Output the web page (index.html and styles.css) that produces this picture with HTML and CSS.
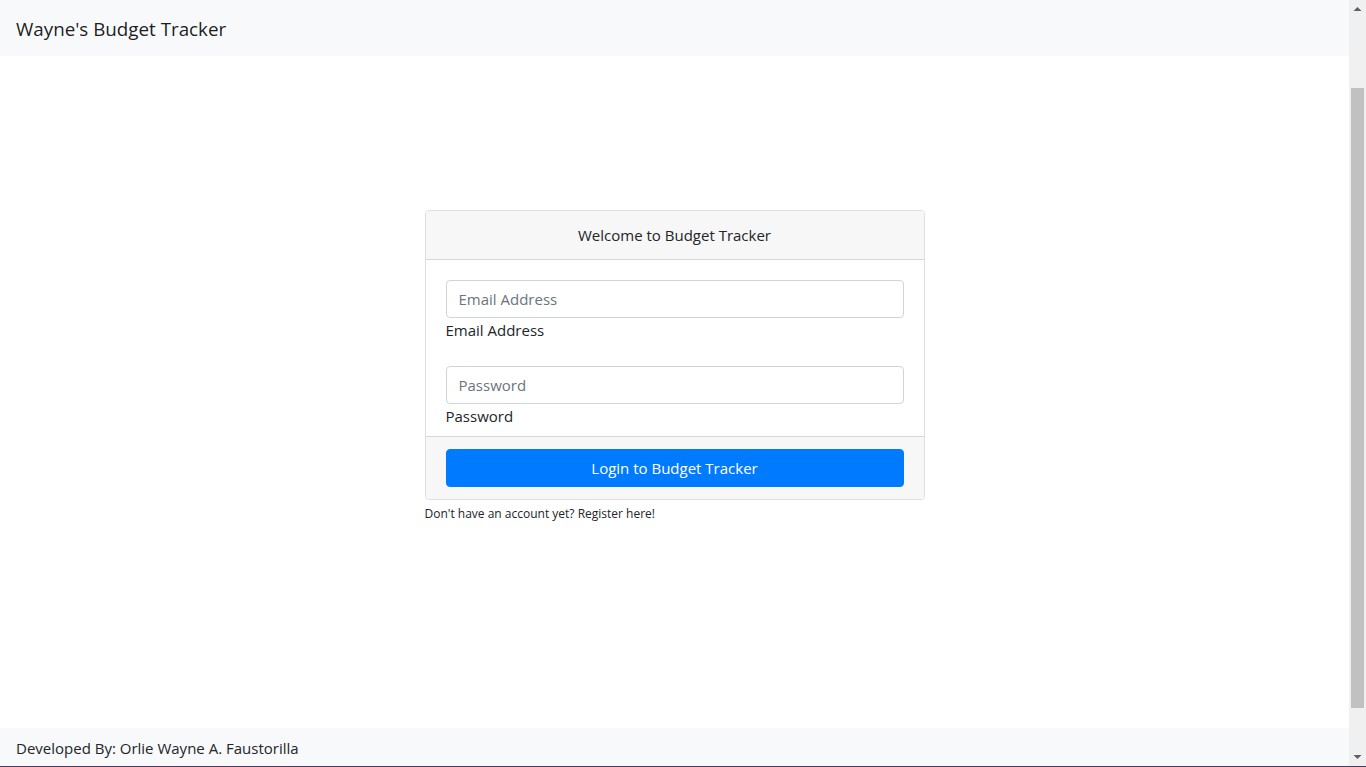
FILE: index.html
```html
<!DOCTYPE html>
<html lang="en">
<head>
<meta charset="utf-8">
<title>Wayne's Budget Tracker</title>
<link rel="stylesheet" href="styles.css">
</head>
<body>
<div class="app">
  <div class="page">
    <nav class="navbar">
      <span class="brand">Wayne's Budget Tracker</span>
    </nav>
    <main class="main">
      <div class="login">
        <div class="card">
          <div class="card-header">Welcome to Budget Tracker</div>
          <form class="card-body">
            <div class="group">
              <input class="control" type="email" placeholder="Email Address">
              <label class="label">Email Address</label>
            </div>
            <div class="group last">
              <input class="control" type="password" placeholder="Password">
              <label class="label">Password</label>
            </div>
          </form>
          <div class="card-footer">
            <button class="btn" type="button">Login to Budget Tracker</button>
          </div>
        </div>
        <a class="register">Don't have an account yet? Register here!</a>
      </div>
    </main>
    <footer class="footer">Developed By: Orlie Wayne A. Faustorilla</footer>
  </div>
  <div class="scrollbar">
    <div class="sb-btn">
      <svg width="17" height="17" viewBox="0 0 17 17"><polygon points="4.5,11 8.5,7 12.5,11" fill="#606060"/></svg>
    </div>
    <div class="sb-track"><div class="sb-thumb"></div></div>
    <div class="sb-btn">
      <svg width="17" height="17" viewBox="0 0 17 17"><polygon points="4.5,6 12.5,6 8.5,10" fill="#606060"/></svg>
    </div>
  </div>
</div>
</body>
</html>
```
FILE: styles.css
```css
body {
  margin: 0;
  font-family: "Open Sans", "Noto Sans", sans-serif;
  font-size: 15px;
  line-height: 24px;
  color: #212529;
  background: #fff;
}
.app {
  display: flex;
  height: 767px;
  border-bottom: 1px solid #4a3b5c;
  box-sizing: border-box;
  overflow: hidden;
}
.page {
  flex: 1;
  display: flex;
  flex-direction: column;
  min-width: 0;
}
.navbar {
  height: 56px;
  flex: none;
  background: #f8f9fa;
  display: flex;
  align-items: center;
  padding: 2px 16px 0;
  box-sizing: border-box;
}
.brand {
  font-size: 18.8px;
  line-height: 30px;
  color: rgba(0, 0, 0, 0.9);
}
.main {
  flex: 1;
  padding-top: 154px;
  box-sizing: border-box;
  display: flex;
  justify-content: center;
}
.login {
  width: 500px;
}
.card {
  border: 1px solid rgba(0, 0, 0, 0.125);
  border-radius: 4px;
  overflow: hidden;
}
.card-header {
  background: #f7f7f7;
  border-bottom: 1px solid rgba(0, 0, 0, 0.125);
  padding: 12px 20px;
  text-align: center;
}
.card-body {
  margin: 0;
  padding: 20px 20px 0;
}
.group {
  display: flex;
  flex-direction: column;
  margin-bottom: 16px;
}
.group.last {
  margin-bottom: 0;
}
.control {
  height: 38px;
  box-sizing: border-box;
  border: 1px solid #ced4da;
  border-radius: 4px;
  padding: 6px 12px;
  font: inherit;
  color: #495057;
  outline: none;
}
.control::placeholder {
  color: #6c757d;
}
.label {
  margin-bottom: 8px;
}
.card-footer {
  background: #f7f7f7;
  border-top: 1px solid rgba(0, 0, 0, 0.125);
  padding: 12px 20px;
}
.btn {
  display: block;
  width: 100%;
  height: 38px;
  border: 1px solid #007bff;
  border-radius: 4px;
  background: #007bff;
  color: #fff;
  font: inherit;
  padding: 6px 12px;
}
.register {
  display: block;
  font-size: 12px;
  line-height: 19px;
  margin-top: 4px;
  color: #212529;
}
.footer {
  flex: none;
  height: 38px;
  background: #f8f9fa;
  padding: 8px 16px 0;
  box-sizing: border-box;
}
.scrollbar {
  width: 17px;
  flex: none;
  display: flex;
  flex-direction: column;
  background: #f0f0f0;
}
.sb-btn {
  height: 17px;
  flex: none;
}
.sb-btn svg {
  display: block;
}
.sb-track {
  flex: 1;
  padding: 0 2px;
}
.sb-thumb {
  margin-top: 71px;
  height: 620px;
  background: #c1c1c1;
}
```
